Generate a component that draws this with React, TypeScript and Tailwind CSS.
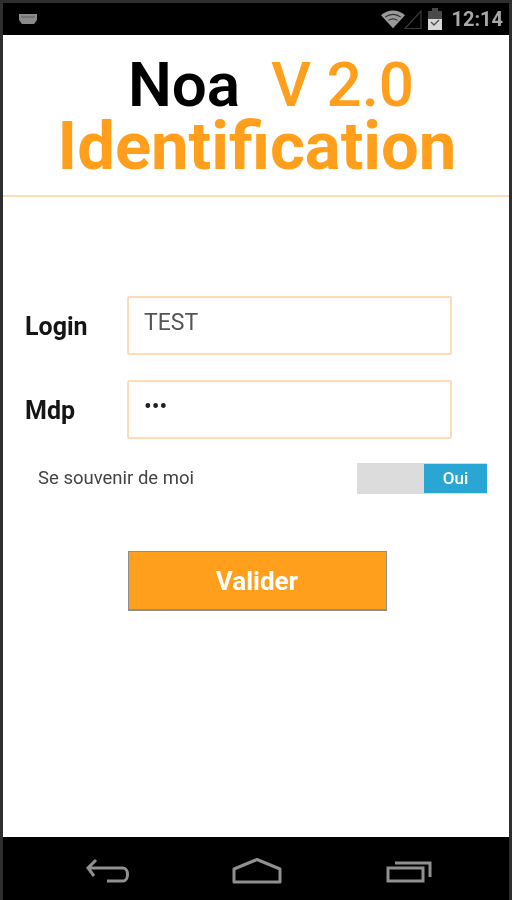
const FONT = { fontFamily: 'Roboto, sans-serif' };

function StatusBar() {
  return (
    <div className="h-[32px] bg-black flex items-center justify-between pl-[15px] pr-[6px] shrink-0">
      <svg width="20" height="12" viewBox="0 0 20 12">
        <path d="M1 1h18v6l-3 4H4L1 7z" fill="#8a8a8a" />
        <path d="M3 4h14" stroke="#5c5c5c" strokeWidth="1" />
      </svg>
      <div className="flex items-center">
        <svg width="24" height="20" viewBox="0 0 26 20">
          <path d="M0 6C7-1 19-1 26 6L13 20z" fill="#9a9a9a" />
          <path d="M4.500 8C9.500 4 16.500 4 21.500 8M8 11.500c3-2 7-2 10 0" stroke="#303030" strokeWidth="1.200" fill="none" />
        </svg>
        <svg width="18" height="20" viewBox="0 0 18 20" className="ml-[-1px]">
          <path d="M1 19.500 17 2v17.500z" fill="none" stroke="#3a3a3a" strokeWidth="1.200" />
        </svg>
        <svg width="16" height="22" viewBox="0 0 16 22" className="ml-[5px]">
          <path d="M5 0h6v3h4v8H1V3h4z" fill="#4a4a4a" />
          <path d="M1 11h14v11H1z" fill="#d8d8d8" />
          <path d="m4 14 3 3 5-5" stroke="#555" strokeWidth="1.500" fill="none" />
        </svg>
        <span className="ml-[8px] text-[20px] leading-none font-bold text-[#a8a8a8]" style={FONT}>12:14</span>
      </div>
    </div>
  );
}

function NavBar() {
  return (
    <div className="h-[63px] bg-black flex items-start justify-center shrink-0 ml-[-3px] mr-[-3px] pt-[21px] pl-[3px]">
      <div className="flex gap-[104px] items-start">
        <svg width="44" height="26" viewBox="0 0 44 26" fill="none" stroke="#909090" strokeWidth="3" className="ml-[2px] mr-[-2px]">
          <path d="M10 2 2 10l6 8M3 10h34c6 0 6 13 0 13H21" />
        </svg>
        <svg width="50" height="26" viewBox="0 0 50 26" fill="none" stroke="#909090" strokeWidth="3">
          <path d="M2 11 25 1.500 48 11v13H2z" strokeLinejoin="round" />
        </svg>
        <svg width="46" height="26" viewBox="0 0 46 26" fill="none" stroke="#909090" strokeWidth="3">
          <path d="M2 10h35v13H2zM9 5h35v14" />
        </svg>
      </div>
    </div>
  );
}

function Field({ label, value, dark }: { label: string; value: string; dark?: boolean }) {
  return (
    <div className="flex items-center">
      <label className="w-[124px] pl-[22px] pt-[2px] text-[25px] font-bold text-[#151515]" style={FONT}>{label}</label>
      <div
        className={`w-[325px] h-[59px] border-2 border-[#ffdcb8] rounded-[2px] px-[15px] pt-[12px] text-[23px] leading-[26px] ${dark ? 'text-[#222]' : 'text-[#555]'}`}
        style={FONT}
      >
        {value}
      </div>
    </div>
  );
}

export default function App() {
  return (
    <div className="w-[512px] h-[900px] bg-black flex flex-col overflow-hidden border-t-[3px] border-t-[#2e2e2e] border-x-[3px] border-x-[#2e2e2e] blur-[0.6px]" style={FONT}>
      <StatusBar />
      <main className="flex-1 bg-white flex flex-col">
        <header className="h-[162px] border-b-2 border-[#ffdcb8] flex flex-col items-center pt-[19px]">
          <h1 className="ml-[30px] text-[62px] leading-[62px] font-medium whitespace-pre text-[#ff9f1c]">
            <span className="text-black font-semibold">Noa</span>  V 2.0
          </h1>
          <h2 className="ml-[2px] text-[67px] leading-[60px] font-bold text-[#ff9f1c]">Identification</h2>
        </header>

        <div className="flex flex-col gap-[25px] pt-[99px]">
          <Field label="Login" value="TEST" />
          <Field label="Mdp" value="•••" dark />
        </div>

        <div className="flex items-center justify-between pl-[35px] pr-[22px] mt-[24px]">
          <span className="text-[18.500px] text-[#444]">Se souvenir de moi</span>
          <div className="w-[130px] h-[31px] bg-[#dcdcdc] flex justify-end items-stretch">
            <span className="w-[63px] my-[1px] bg-[#29a6d4] text-white text-[17px] font-medium flex items-center justify-center">Oui</span>
          </div>
        </div>

        <div className="flex justify-center mt-[57px] pl-[2px]">
          <button className="w-[259px] h-[60px] pt-[1px] bg-[#ff9f1c] border border-[#8a8f8f] border-b-2 text-white text-[26px] font-bold">
            Valider
          </button>
        </div>
      </main>
      <NavBar />
    </div>
  );
}
